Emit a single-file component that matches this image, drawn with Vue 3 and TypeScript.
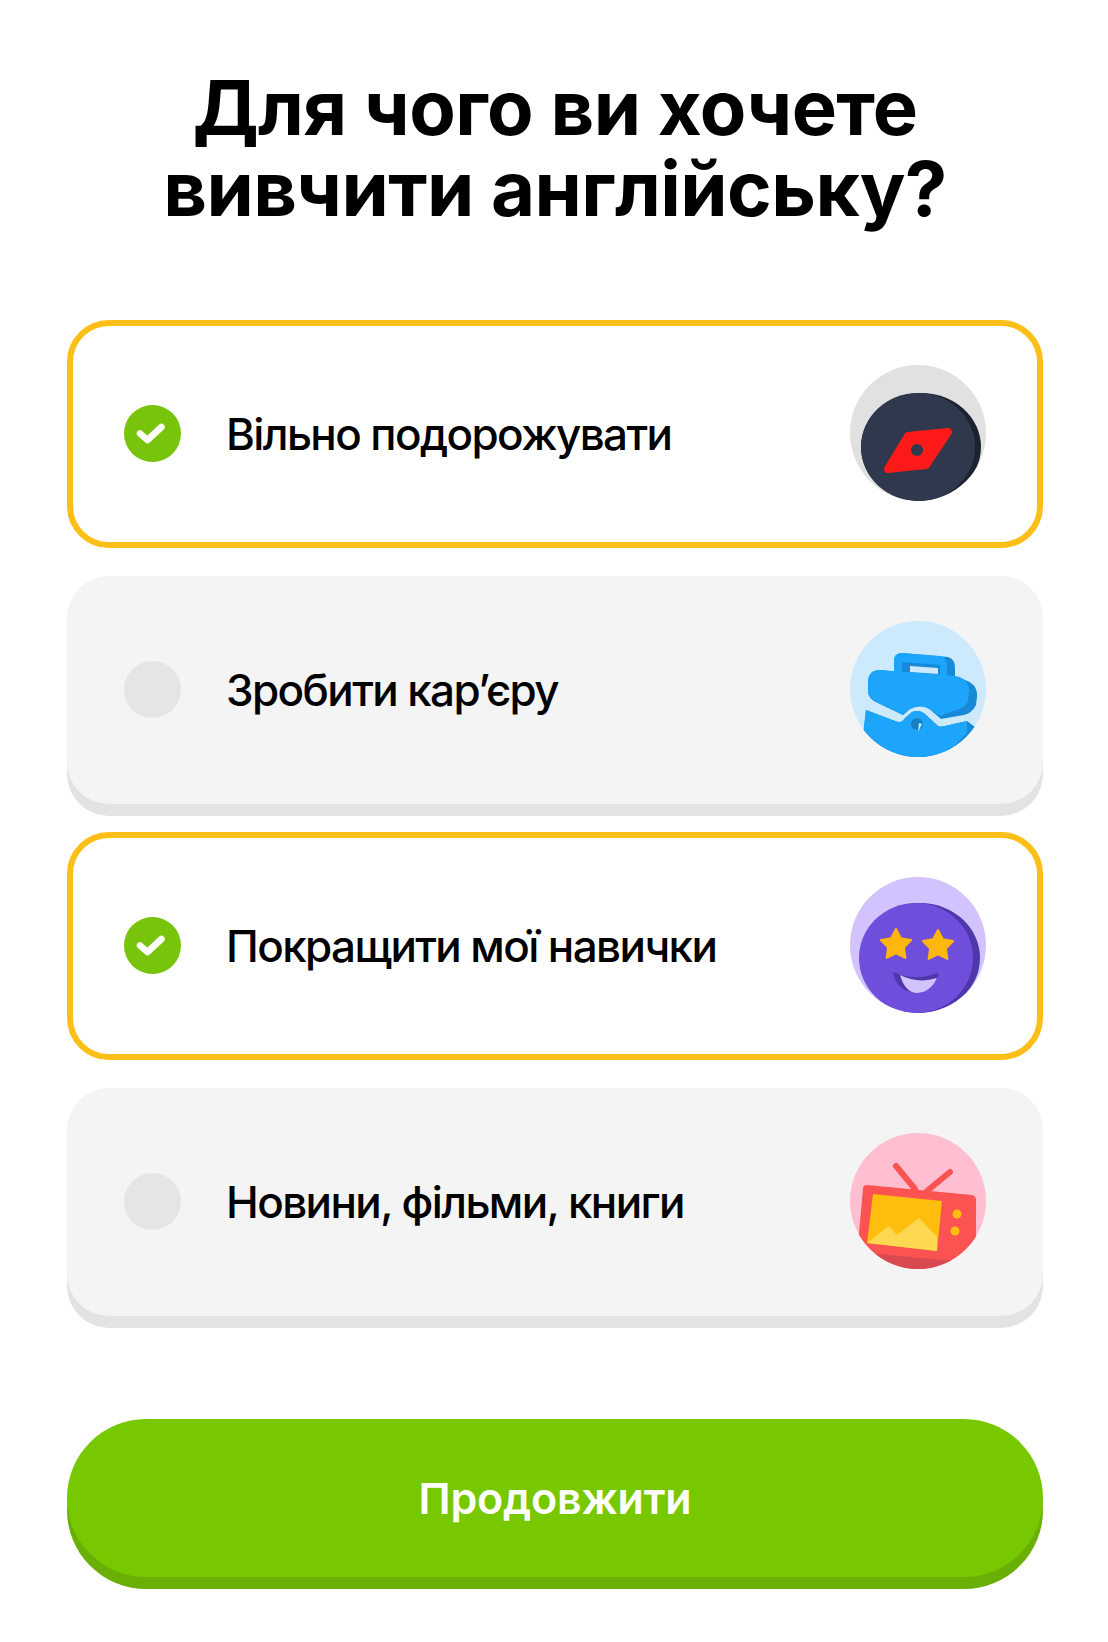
<script setup lang="ts">
interface Goal { id: string; label: string; selected: boolean }
const goals: Goal[] = [
  { id: 'compass', label: 'Вільно подорожувати', selected: true },
  { id: 'case', label: 'Зробити кар’єру', selected: false },
  { id: 'face', label: 'Покращити мої навички', selected: true },
  { id: 'tv', label: 'Новини, фільми, книги', selected: false },
]
const star = (cx: number, cy: number, r: number): string => {
  const pts: string[] = []
  for (let i = 0; i < 10; i++) {
    const rad = i % 2 === 0 ? r : r * 0.52
    const a = -Math.PI / 2 + (i * Math.PI) / 5
    pts.push(`${(cx + rad * Math.cos(a)).toFixed(1)},${(cy + rad * Math.sin(a)).toFixed(1)}`)
  }
  return pts.join(' ')
}
</script>

<template>
  <main class="page">
    <h1 class="title">Для чого ви хочете<br />вивчити англійську?</h1>
    <ul class="list">
      <li v-for="g in goals" :key="g.id" class="card" :class="{ selected: g.selected }">
        <span class="radio">
          <svg v-if="g.selected" viewBox="0 0 57 57" width="57" height="57">
            <path d="M16 28.5 L23.5 35 L37.5 22" fill="none" stroke="#fff" stroke-width="6.5" stroke-linecap="round" stroke-linejoin="round" />
          </svg>
        </span>
        <span class="label">{{ g.label }}</span>
        <svg class="icon" viewBox="0 0 136 136" width="136" height="136">
          <defs>
            <clipPath :id="`clip-${g.id}`"><circle cx="68" cy="68" r="68" /></clipPath>
          </defs>
          <g :clip-path="`url(#clip-${g.id})`">
            <template v-if="g.id === 'compass'">
              <rect width="136" height="136" fill="#e1e1e1" />
              <ellipse cx="71" cy="82" rx="60" ry="54" fill="#1d2230" />
              <ellipse cx="68" cy="82" rx="57" ry="54" fill="#2f384c" />
              <path d="M98 67 L76 100 L38 104 L58 71 Z" fill="#ff1a1a" stroke="#ff1a1a" stroke-width="8" stroke-linejoin="round" />
              <circle cx="67" cy="85" r="6" fill="#2f384c" />
            </template>
            <template v-else-if="g.id === 'case'">
              <rect width="136" height="136" fill="#cdeafd" />
              <path d="M52 32 L98 36 Q105 38 105 47 L105 58 L44 52 L44 40 Q44 32 52 32 Z" fill="#1889d6" />
              <path d="M52 32 L90 35 Q97 36 97 45 L97 56 L44 52 L44 40 Q44 32 52 32 Z" fill="#1ca5fb" />
              <path d="M52 41 L90 44 L90 54 L52 52 Z" fill="#1889d6" />
              <path d="M60 45 L88 47 L88 53 L60 51 Z" fill="#cdeafd" />
              <path d="M30 49 L112 58 Q128 62 127 76 L126 84 Q122 94 108 95 L91 98 L84 92 Q74 81 60 88 L53 94 L28 82 Q18 78 18 70 L18 60 Q19 49 30 49 Z" fill="#1889d6" />
              <path d="M30 49 L106 55 Q120 58 119 72 L118 80 Q115 88 100 91 L91 95 L84 92 Q74 81 60 88 L53 94 L28 82 Q18 78 18 70 L18 60 Q19 49 30 49 Z" fill="#1ca5fb" />
              <path d="M16 89 L45 100 Q52 103 55 97 L62 91 Q70 88 76 94 L88 105 Q90 106 95 105 L117 100 L125 106 L116 140 L10 140 Z" fill="#1889d6" />
              <path d="M16 89 L45 100 Q52 103 55 97 L62 91 Q70 88 76 94 L88 105 Q90 106 95 105 L117 100 L117 112 L90 140 L10 140 Z" fill="#1ca5fb" />
              <circle cx="67" cy="103" r="6" fill="#1580c6" />
              <path d="M69 102 L72 103 L68 111 Z" fill="#cdeafd" />
            </template>
            <template v-else-if="g.id === 'face'">
              <rect width="136" height="136" fill="#d2c2fd" />
              <ellipse cx="70" cy="81" rx="60" ry="55" fill="#4d37ab" />
              <ellipse cx="66" cy="81" rx="57" ry="55" fill="#6f4edb" />
              <polygon :points="star(46, 68, 16)" fill="#ffb60f" stroke="#ffb60f" stroke-width="2" stroke-linejoin="round" />
              <polygon :points="star(88, 69, 16)" fill="#ffb60f" stroke="#ffb60f" stroke-width="2" stroke-linejoin="round" />
              <path d="M43 95 Q65 105 87 96 Q90 97 88 100 Q78 116 66 116 Q46 114 43 95 Z" fill="#4d37ab" />
              <path d="M50 98 Q68 107 87 101 Q80 116 66 116 Q55 115 50 98 Z" fill="#d2c2fd" />
            </template>
            <template v-else>
              <rect width="136" height="136" fill="#ffbfd0" />
              <path d="M46 33 L65 56 M100 39 L77 58" stroke="#fb5252" stroke-width="6" stroke-linecap="round" />
              <path d="M17 52 L122 62 Q126 63 126 67 L126 140 L5 140 L9 100 L13 56 Q13 52 17 52 Z" fill="#fb5252" />
              <path d="M8 119 L92 127 L140 127 L140 140 L0 140 Z" fill="#d94a50" />
              <path d="M23 61 L92 68 L87 118 L17 110 Z" fill="#ffbe0e" />
              <path d="M17 110 L39 93 L47 102 L69 85 L87 104 L87 118 Z" fill="#ffd852" />
              <circle cx="107" cy="81" r="4.5" fill="#ffbe0e" />
              <circle cx="105" cy="98" r="4.5" fill="#ffbe0e" />
            </template>
          </g>
        </svg>
      </li>
    </ul>
    <button class="cta" type="button">Продовжити</button>
  </main>
</template>

<style scoped>
.page {
  box-sizing: border-box;
  width: 1108px;
  height: 1642px;
  padding: 67px 65px 0 67px;
  background: #fff;
  font-family: Inter, "Noto Sans", sans-serif;
  color: #000;
  overflow: hidden;
}
.title {
  margin: 0;
  text-align: center;
  font-size: 76px;
  line-height: 81px;
  font-weight: 700;
  letter-spacing: -0.6px;
}
.list {
  list-style: none;
  margin: 91px 0 0;
  padding: 0;
  display: flex;
  flex-direction: column;
  gap: 28px;
}
.card {
  box-sizing: border-box;
  height: 228px;
  display: flex;
  align-items: center;
  padding: 0 57px;
  border-radius: 42px;
  background: #f4f4f4;
  box-shadow: 0 12px 0 #e3e3e3;
}
.card.selected {
  background: #fff;
  border: 6px solid #fcbf17;
  box-shadow: none;
  padding: 0 51px;
}
.radio {
  flex: none;
  width: 57px;
  height: 57px;
  margin-bottom: 2px;
  border-radius: 50%;
  background: #e5e5e5;
}
.radio svg { display: block; }
.selected .radio { background: #78c40d; }
.label {
  flex: 1;
  margin-left: 45px;
  font-size: 44px;
  font-weight: 500;
  letter-spacing: -1.6px;
}
.icon {
  flex: none;
  display: block;
  margin-bottom: 2px;
}
.cta {
  display: block;
  width: 100%;
  height: 158px;
  margin-top: 103px;
  border: 0;
  border-radius: 80px;
  background: #78c800;
  box-shadow: 0 12px 0 #6aaf06;
  color: #fff;
  font-family: inherit;
  font-size: 43px;
  font-weight: 600;
  letter-spacing: -0.2px;
}
</style>

<style>
html, body { background: #fff; }
</style>
